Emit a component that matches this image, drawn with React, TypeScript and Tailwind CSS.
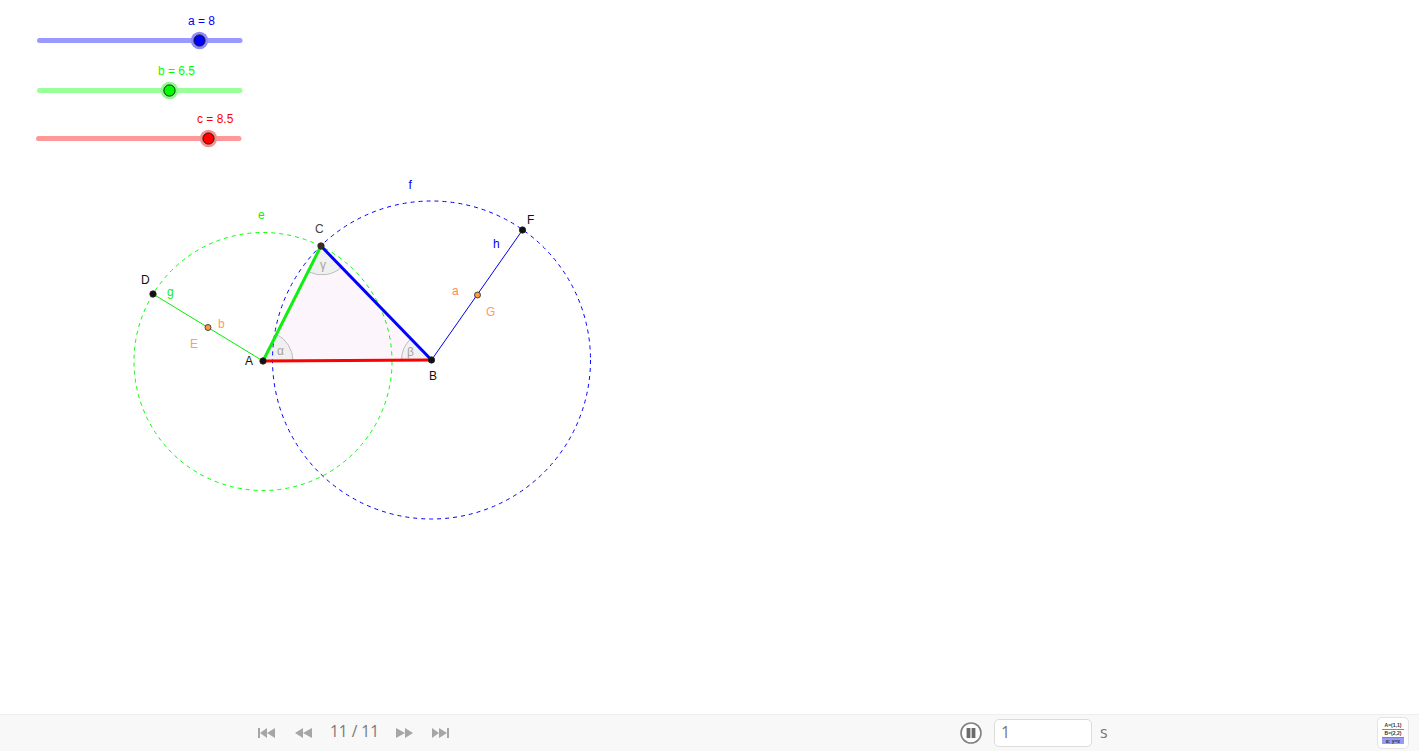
import React from 'react';

const labelFont = '"Liberation Sans", Arial, sans-serif';

interface SliderProps {
  x1: number;
  x2: number;
  y: number;
  thumb: number;
  color: string;
  track: string;
  halo: string;
  label: string;
  labelX: number;
  labelY: number;
}

const Slider: React.FC<SliderProps> = ({ x1, x2, y, thumb, color, track, halo, label, labelX, labelY }) => (
  <g>
    <line x1={x1} y1={y} x2={x2} y2={y} stroke={track} strokeWidth={5} strokeLinecap="round" />
    <circle cx={thumb} cy={y} r={8.7} fill={halo} />
    <circle cx={thumb} cy={y} r={5.6} fill={color} stroke="#1a1a1a" strokeWidth={1} />
    <text x={labelX} y={labelY} fontSize={12} fill={color} fontFamily={labelFont}>
      {label}
    </text>
  </g>
);

const Point: React.FC<{ x: number; y: number; fill?: string; r?: number }> = ({ x, y, fill = '#111111', r = 3.2 }) => (
  <circle cx={x} cy={y} r={r} fill={fill} stroke="#222222" strokeWidth={0.8} />
);

const Label: React.FC<{ x: number; y: number; fill: string; children: React.ReactNode; size?: number }> = ({
  x,
  y,
  fill,
  children,
  size = 12,
}) => (
  <text x={x} y={y} fontSize={size} fill={fill} fontFamily={labelFont}>
    {children}
  </text>
);

const Construction = () => (
  <svg width="1419" height="714" viewBox="0 0 1419 714" className="block">
    <Slider x1={39.5} x2={240} y={40.5} thumb={199.5} color="#0000ff" track="#9999ff" halo="#8c8cf5" label="a = 8" labelX={188} labelY={25} />
    <Slider x1={39.5} x2={240} y={90.5} thumb={169.5} color="#00ff00" track="#99ff99" halo="#8ff78f" label="b = 6.5" labelX={158} labelY={75} />
    <Slider x1={38.5} x2={239} y={138.5} thumb={208.5} color="#ff0000" track="#ff9999" halo="#f79090" label="c = 8.5" labelX={197} labelY={123} />

    {/* triangle fill */}
    <polygon points="263,361 431.5,360 321,246" fill="#fdf5fc" />

    {/* angle wedges */}
    <path d="M263 361 L293 361 A30 30 0 0 0 276 334 Z" fill="#f0f0f0" stroke="#bdbdbd" strokeWidth={1} />
    <path d="M431.5 360 L401.5 360.2 A30 30 0 0 1 410.5 339 Z" fill="#f2f2f2" stroke="#bdbdbd" strokeWidth={1} />
    <path d="M321 246 L309 272 A30 30 0 0 0 342 267 Z" fill="#f0f0f0" stroke="#bdbdbd" strokeWidth={1} />

    <circle cx={263} cy={361.5} r={129} fill="none" stroke="#00ff00" strokeWidth={1} strokeDasharray="4 4" />
    <circle cx={431.5} cy={360} r={159} fill="none" stroke="#0000ff" strokeWidth={1} strokeDasharray="4 4" />

    <line x1={153} y1={294} x2={263} y2={361} stroke="#00ee00" strokeWidth={1} />
    <line x1={431.5} y1={360} x2={522.5} y2={230} stroke="#0000ee" strokeWidth={1} />

    <line x1={263} y1={361} x2={431.5} y2={360} stroke="#ff0000" strokeWidth={3} />
    <line x1={263} y1={361} x2={321} y2={246} stroke="#11ee11" strokeWidth={3} />
    <line x1={321} y1={246} x2={431.5} y2={360} stroke="#0000ff" strokeWidth={3} />

    <Point x={263} y={361} />
    <Point x={431.5} y={360} />
    <Point x={321} y={246} fill="#3b2c28" />
    <Point x={153} y={294} />
    <Point x={522.5} y={230} />
    <Point x={208} y={327.5} fill="#ff9a3c" r={3} />
    <Point x={477.5} y={295} fill="#ff9a3c" r={3} />

    <Label x={245} y={365} fill="#111111">A</Label>
    <Label x={429} y={380} fill="#111111">B</Label>
    <Label x={315} y={233} fill="#444444">C</Label>
    <Label x={141} y={284} fill="#111111">D</Label>
    <Label x={190} y={348} fill="#ffa060">E</Label>
    <Label x={527} y={224} fill="#111111">F</Label>
    <Label x={486} y={316} fill="#ff9a5c">G</Label>
    <Label x={258} y={219} fill="#11ee11">e</Label>
    <Label x={408.5} y={189} fill="#0000ee">f</Label>
    <Label x={167} y={296} fill="#11ee11">g</Label>
    <Label x={493} y={248} fill="#0000ee">h</Label>
    <Label x={218} y={328} fill="#ff9a5c">b</Label>
    <Label x={452} y={295} fill="#ff8a50">a</Label>
    <Label x={277} y={355} fill="#a3a3a3">α</Label>
    <Label x={407} y={356} fill="#a3a3a3">β</Label>
    <Label x={320} y={269} fill="#a3a3a3">γ</Label>
  </svg>
);

const SkipBack = () => (
  <svg width="17" height="12" viewBox="0 0 17 12" fill="#a6a6a6">
    <rect x="0" y="1" width="2" height="10" />
    <path d="M2 6 L9 1 V11 Z M9 6 L17 1 V11 Z" />
  </svg>
);

const StepBack = () => (
  <svg width="17" height="12" viewBox="0 0 17 12" fill="#a6a6a6">
    <path d="M0 6 L8 1 V11 Z M8 6 L17 1 V11 Z" />
  </svg>
);

const StepForward = () => (
  <svg width="17" height="12" viewBox="0 0 17 12" fill="#a6a6a6">
    <path d="M0 1 L9 6 L0 11 Z M9 1 L17 6 L9 11 Z" />
  </svg>
);

const SkipForward = () => (
  <svg width="17" height="12" viewBox="0 0 17 12" fill="#a6a6a6">
    <path d="M0 1 L7 6 L0 11 Z M7 1 L15 6 L7 11 Z" />
    <rect x="15" y="1" width="2" height="10" />
  </svg>
);

const PauseIcon = () => (
  <svg width="22" height="22" viewBox="0 0 22 22">
    <circle cx="11" cy="11" r="10" fill="#ffffff" stroke="#808080" strokeWidth="1.6" />
    <rect x="6.6" y="6" width="3.8" height="10" fill="#6b6b6b" />
    <rect x="11.6" y="6" width="3.8" height="10" fill="#6b6b6b" />
  </svg>
);

export default function App() {
  return (
    <div className="flex h-[751px] w-[1419px] flex-col overflow-hidden bg-white">
      <div className="h-[714px]">
        <Construction />
      </div>
      <div
        className="flex h-[37px] items-center border-t border-[#eeeeee] bg-[#f8f8f8] pl-[258px] text-[#777777]"
        style={{ fontFamily: '"Open Sans", sans-serif' }}
      >
        <div className="flex items-center">
          <SkipBack />
          <div className="ml-[20px]">
            <StepBack />
          </div>
          <span className="mb-[2px] ml-[17px] w-[51px] whitespace-nowrap text-center text-[15.5px] leading-none">11 / 11</span>
          <div className="ml-[16px]">
            <StepForward />
          </div>
          <div className="ml-[19px]">
            <SkipForward />
          </div>
        </div>
        <div className="ml-[511px] flex items-center">
          <PauseIcon />
          <div className="mb-[1px] ml-[12px] flex h-[28px] w-[98px] items-center rounded-[5px] border border-[#dcdcdc] bg-white pb-[2px] pl-[6px] text-[16px]">
            1
          </div>
          <span className="mb-[2px] ml-[8px] text-[16px]">s</span>
        </div>
        <div className="ml-auto mr-[10px] flex h-[32px] w-[32px] flex-col items-center justify-center rounded-[5px] border border-[#e4e4e4] bg-white">
          <span
            className="w-[22px] whitespace-nowrap border-b border-[#888888] text-center text-[5px] font-bold leading-[7px] text-[#333333]"
            style={{ fontFamily: labelFont }}
          >
            A=(1,1)
          </span>
          <span
            className="w-[22px] whitespace-nowrap border-b border-[#888888] text-center text-[5px] font-bold leading-[7px] text-[#333333]"
            style={{ fontFamily: labelFont }}
          >
            B=(2,2)
          </span>
          <span
            className="w-[22px] whitespace-nowrap bg-[#9a9af5] text-center text-[5px] font-bold leading-[6px] text-[#333333]"
            style={{ fontFamily: labelFont }}
          >
            a: y=x
          </span>
        </div>
      </div>
    </div>
  );
}
